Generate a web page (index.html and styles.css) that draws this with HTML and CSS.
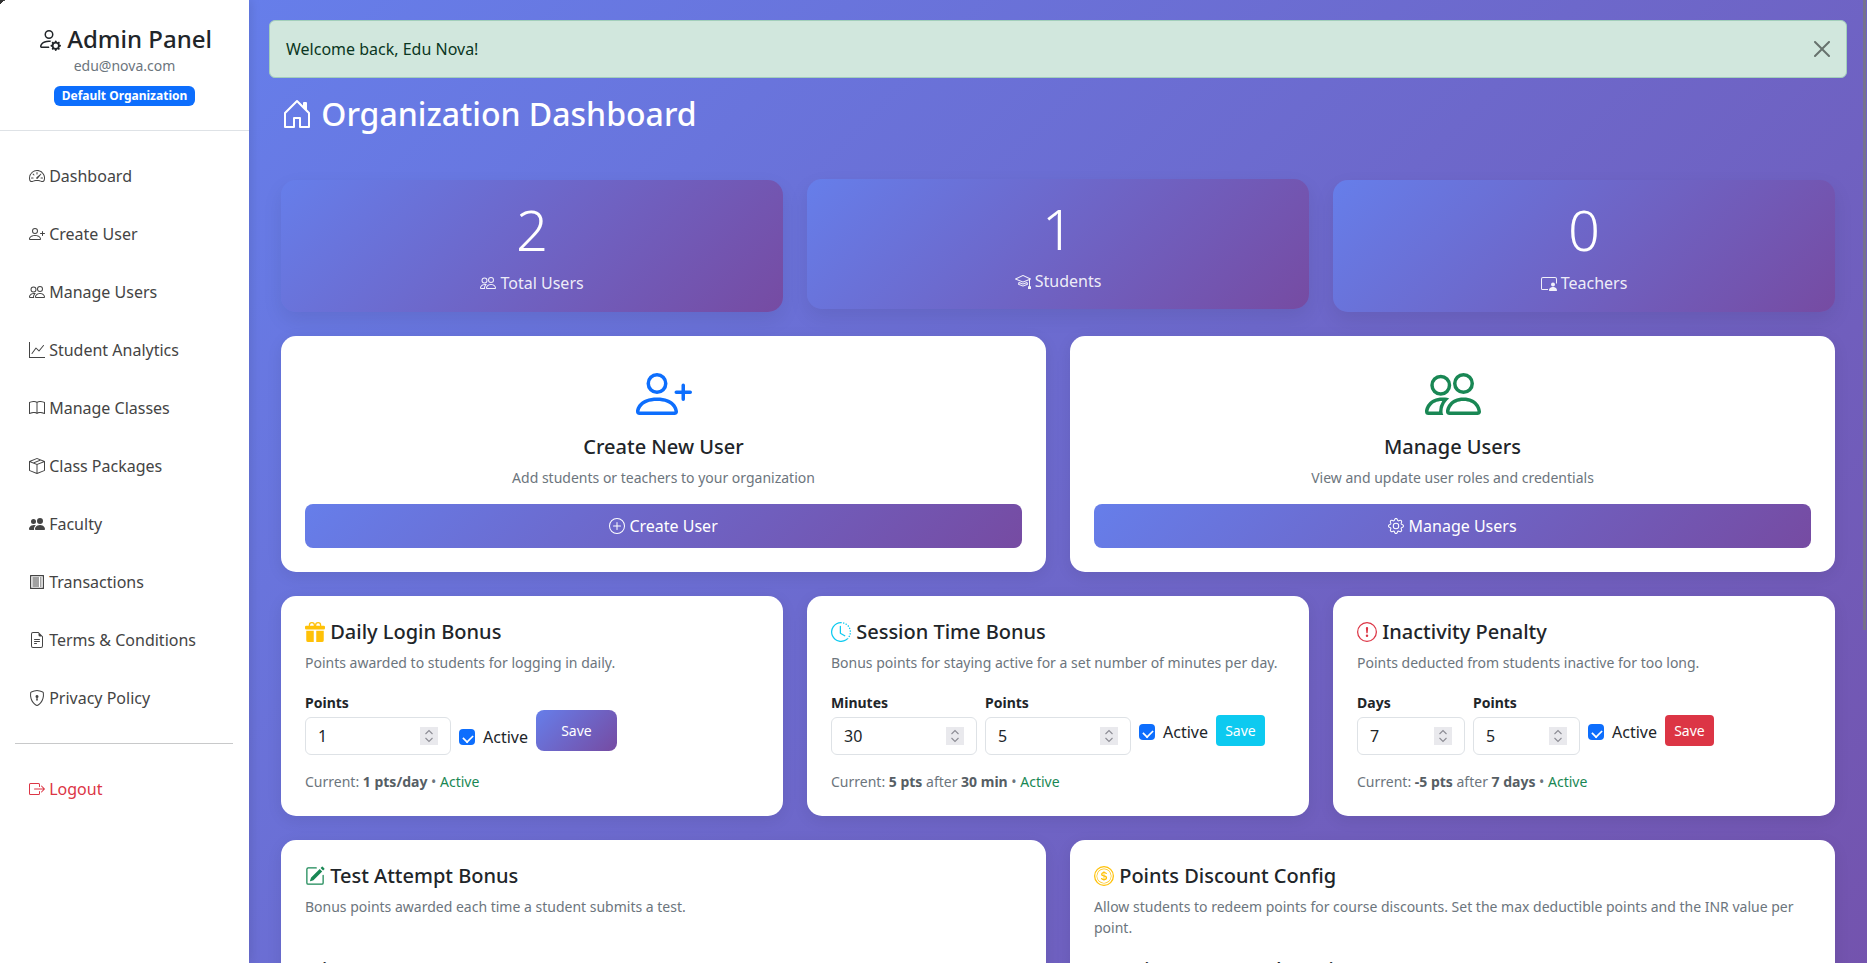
FILE: index.html
```html
<!DOCTYPE html>
<html lang="en">
<head>
<meta charset="utf-8">
<title>Organization Dashboard</title>
<link rel="stylesheet" href="styles.css">
</head>
<body>
<svg class="defs" aria-hidden="true">
<defs>
<symbol id="i-person-gear" viewBox="0 0 16 16"><path d="M11 5a3 3 0 1 1-6 0 3 3 0 0 1 6 0M8 7a2 2 0 1 0 0-4 2 2 0 0 0 0 4m.256 7a4.5 4.5 0 0 1-.229-1.004H3c.001-.246.154-.986.832-1.664C4.484 10.68 5.711 10 8 10q.39 0 .74.025c.226-.341.496-.65.804-.918Q8.844 9.002 8 9c-5 0-6 3-6 4s1 1 1 1zm3.63-4.54c.18-.613 1.048-.613 1.229 0l.043.148a.64.64 0 0 0 .921.382l.136-.074c.561-.306 1.175.308.87.869l-.075.136a.64.64 0 0 0 .382.92l.149.045c.612.18.612 1.048 0 1.229l-.15.043a.64.64 0 0 0-.38.921l.074.136c.305.561-.309 1.175-.87.87l-.136-.075a.64.64 0 0 0-.92.382l-.045.149c-.18.612-1.048.612-1.229 0l-.043-.15a.64.64 0 0 0-.921-.38l-.136.074c-.561.305-1.175-.309-.87-.87l.075-.136a.64.64 0 0 0-.382-.92l-.148-.045c-.613-.18-.613-1.048 0-1.229l.148-.043a.64.64 0 0 0 .382-.921l-.074-.136c-.306-.561.308-1.175.869-.87l.136.075a.64.64 0 0 0 .92-.382zM14 12.5a1.5 1.5 0 1 0-3 0 1.5 1.5 0 0 0 3 0"/></symbol>
<symbol id="i-speedometer" viewBox="0 0 16 16"><path d="M8 4a.5.5 0 0 1 .5.5V6a.5.5 0 0 1-1 0V4.5A.5.5 0 0 1 8 4M3.732 5.732a.5.5 0 0 1 .707 0l.915.914a.5.5 0 1 1-.708.708l-.914-.915a.5.5 0 0 1 0-.707M2 10a.5.5 0 0 1 .5-.5h1.586a.5.5 0 0 1 0 1H2.5A.5.5 0 0 1 2 10m9.5 0a.5.5 0 0 1 .5-.5h1.5a.5.5 0 0 1 0 1H12a.5.5 0 0 1-.5-.5m.754-4.246a.39.39 0 0 0-.527-.02L7.547 9.31a.91.91 0 1 0 1.302 1.258l3.434-4.297a.39.39 0 0 0-.029-.518z"/><path fill-rule="evenodd" d="M0 10a8 8 0 1 1 15.547 2.661c-.442 1.253-1.845 1.602-2.932 1.25C11.309 13.488 9.475 13 8 13c-1.474 0-3.31.488-4.615.911-1.087.352-2.49.003-2.932-1.25A8 8 0 0 1 0 10m8-7a7 7 0 0 0-6.603 9.329c.203.575.923.876 1.68.63C4.397 12.533 6.358 12 8 12s3.604.532 4.923.96c.757.245 1.477-.056 1.68-.631A7 7 0 0 0 8 3"/></symbol>
<symbol id="i-person-plus" viewBox="0 0 16 16"><path d="M6 8a3 3 0 1 0 0-6 3 3 0 0 0 0 6m2-3a2 2 0 1 1-4 0 2 2 0 0 1 4 0m4 8c0 1-1 1-1 1H1s-1 0-1-1 1-4 6-4 6 3 6 4m-1-.004c-.001-.246-.154-.986-.832-1.664C9.516 10.68 8.289 10 6 10s-3.516.68-4.168 1.332c-.678.678-.83 1.418-.832 1.664z"/><path fill-rule="evenodd" d="M13.5 5a.5.5 0 0 1 .5.5V7h1.5a.5.5 0 0 1 0 1H14v1.5a.5.5 0 0 1-1 0V8h-1.5a.5.5 0 0 1 0-1H13V5.5a.5.5 0 0 1 .5-.5"/></symbol>
<symbol id="i-people" viewBox="0 0 16 16"><path d="M15 14s1 0 1-1-1-4-5-4-5 3-5 4 1 1 1 1zm-7.978-1L7 12.996c.001-.264.167-1.03.76-1.72C8.312 10.629 9.282 10 11 10c1.717 0 2.687.63 3.24 1.276.593.69.758 1.457.76 1.72l-.008.002-.014.002H7.022ZM11 7a2 2 0 1 0 0-4 2 2 0 0 0 0 4m3-2a3 3 0 1 1-6 0 3 3 0 0 1 6 0M6.936 9.28a6 6 0 0 0-1.23-.247A7 7 0 0 0 5 9c-4 0-5 3-5 4q0 1 1 1h4.216A2.24 2.24 0 0 1 5 13c0-1.01.377-2.042 1.09-2.904.243-.294.526-.569.846-.816M4.92 10A5.5 5.5 0 0 0 4 13H1c0-.26.164-1.03.76-1.724.545-.636 1.492-1.256 3.16-1.275ZM1.5 5.5a3 3 0 1 1 6 0 3 3 0 0 1-6 0m3-2a2 2 0 1 0 0 4 2 2 0 0 0 0-4"/></symbol>
<symbol id="i-graph" viewBox="0 0 16 16"><path fill-rule="evenodd" d="M0 0h1v15h15v1H0zm14.817 3.113a.5.5 0 0 1 .07.704l-4.5 5.5a.5.5 0 0 1-.74.037L7.06 6.767l-3.656 5.027a.5.5 0 0 1-.808-.588l4-5.5a.5.5 0 0 1 .758-.06l2.609 2.61 4.15-5.073a.5.5 0 0 1 .704-.07"/></symbol>
<symbol id="i-book" viewBox="0 0 16 16"><path d="M1 2.828c.885-.37 2.154-.769 3.388-.893 1.33-.134 2.458.063 3.112.752v9.746c-.935-.53-2.12-.603-3.213-.493-1.18.12-2.37.461-3.287.811zm7.5-.141c.654-.689 1.782-.886 3.112-.752 1.234.124 2.503.523 3.388.893v9.923c-.918-.35-2.107-.692-3.287-.81-1.094-.111-2.278-.039-3.213.492zM8 1.783C7.015.936 5.587.81 4.287.94c-1.514.153-3.042.672-3.994 1.105A.5.5 0 0 0 0 2.5v11a.5.5 0 0 0 .707.455c.882-.4 2.303-.881 3.68-1.02 1.409-.142 2.59.087 3.223.877a.5.5 0 0 0 .78 0c.633-.79 1.814-1.019 3.222-.877 1.378.139 2.8.62 3.681 1.02A.5.5 0 0 0 16 13.5v-11a.5.5 0 0 0-.293-.455c-.952-.433-2.48-.952-3.994-1.105C10.413.809 8.985.936 8 1.783"/></symbol>
<symbol id="i-box" viewBox="0 0 16 16"><path d="M8.186 1.113a.5.5 0 0 0-.372 0L1.846 3.5l2.404.961L10.404 2zm3.564 1.426L5.596 5 8 5.961 14.154 3.5zm3.25 1.7-6.5 2.6v7.922l6.5-2.6V4.24zM7.5 14.762V6.838L1 4.239v7.925zM7.443.184a1.5 1.5 0 0 1 1.114 0l7.129 2.852A.5.5 0 0 1 16 3.5v8.662a1 1 0 0 1-.629.928l-7.185 2.874a.5.5 0 0 1-.372 0L.63 13.09a1 1 0 0 1-.63-.928V3.5a.5.5 0 0 1 .314-.464z"/></symbol>
<symbol id="i-people-fill" viewBox="0 0 16 16"><path d="M7 14s-1 0-1-1 1-4 5-4 5 3 5 4-1 1-1 1zm4-6a3 3 0 1 0 0-6 3 3 0 0 0 0 6m-5.784 6A2.24 2.24 0 0 1 5 13c0-1.355.68-2.75 1.936-3.72A6.3 6.3 0 0 0 5 9c-4 0-5 3-5 4s1 1 1 1zM4.5 8a2.5 2.5 0 1 0 0-5 2.5 2.5 0 0 0 0 5"/></symbol>
<symbol id="i-transactions" viewBox="0 0 16 16"><path fill-rule="evenodd" d="M1.5 1h13a.5.5 0 0 1 .5.5v13a.5.5 0 0 1-.5.5h-13a.5.5 0 0 1-.5-.5v-13a.5.5 0 0 1 .5-.5m.7 1.2v11.6h11.6V2.2z"/><path d="M3.5 3.5h6.500v1H3.5zM3.5 5.5h6.500v1H3.5zM3.5 7.5h6.500v1H3.5zM3.5 9.5h6.500v1H3.5zM3.5 11.5h6.500v1H3.5zM11 3.5h1.500v1H11zM11 5.5h1.500v1H11zM11 7.5h1.500v1H11zM11 9.500h1.500v1H11zM11 11.500h1.500v1H11z"/></symbol>
<symbol id="i-file" viewBox="0 0 16 16"><path d="M5.5 7a.5.5 0 0 0 0 1h5a.5.5 0 0 0 0-1zM5 9.5a.5.5 0 0 1 .5-.5h5a.5.5 0 0 1 0 1h-5a.5.5 0 0 1-.5-.5m0 2a.5.5 0 0 1 .5-.5h2a.5.5 0 0 1 0 1h-2a.5.5 0 0 1-.5-.5"/><path d="M9.5 0H4a2 2 0 0 0-2 2v12a2 2 0 0 0 2 2h8a2 2 0 0 0 2-2V4.5zm0 1v2A1.5 1.5 0 0 0 11 4.5h2V14a1 1 0 0 1-1 1H4a1 1 0 0 1-1-1V2a1 1 0 0 1 1-1z"/></symbol>
<symbol id="i-shield" viewBox="0 0 16 16"><path d="M5.338 1.59a61 61 0 0 0-2.837.856.48.48 0 0 0-.328.39c-.554 4.157.726 7.19 2.253 9.188a10.7 10.7 0 0 0 2.287 2.233c.346.244.652.42.893.533q.18.085.293.118a1 1 0 0 0 .101.025 1 1 0 0 0 .1-.025q.114-.034.294-.118c.24-.113.547-.29.893-.533a10.7 10.7 0 0 0 2.287-2.233c1.527-1.997 2.807-5.031 2.253-9.188a.48.48 0 0 0-.328-.39c-.651-.213-1.75-.56-2.837-.855C9.552 1.29 8.531 1.067 8 1.067c-.53 0-1.552.223-2.662.524zM5.072.56C6.157.265 7.31 0 8 0s1.843.265 2.928.56c1.11.3 2.229.655 2.887.87a1.54 1.54 0 0 1 1.044 1.262c.596 4.477-.787 7.795-2.465 9.99a11.8 11.8 0 0 1-2.517 2.453 7 7 0 0 1-1.048.625c-.28.132-.581.24-.829.24s-.548-.108-.829-.24a7 7 0 0 1-1.048-.625 11.8 11.8 0 0 1-2.517-2.453C1.928 10.487.545 7.169 1.141 2.692A1.54 1.54 0 0 1 2.185 1.43 63 63 0 0 1 5.072.56"/><path d="M9.5 6.5a1.5 1.5 0 0 1-1 1.415l.385 1.99a.5.5 0 0 1-.491.595h-.788a.5.5 0 0 1-.49-.595l.384-1.99a1.5 1.5 0 1 1 2-1.415"/></symbol>
<symbol id="i-logout" viewBox="0 0 16 16"><path fill-rule="evenodd" d="M10 12.5a.5.5 0 0 1-.5.5h-8a.5.5 0 0 1-.5-.5v-9a.5.5 0 0 1 .5-.5h8a.5.5 0 0 1 .5.5v2a.5.5 0 0 0 1 0v-2A1.5 1.5 0 0 0 9.5 2h-8A1.5 1.5 0 0 0 0 3.5v9A1.5 1.5 0 0 0 1.5 14h8a1.5 1.5 0 0 0 1.5-1.5v-2a.5.5 0 0 0-1 0z"/><path fill-rule="evenodd" d="M15.854 8.354a.5.5 0 0 0 0-.708l-3-3a.5.5 0 0 0-.708.708L14.293 7.5H5.5a.5.5 0 0 0 0 1h8.793l-2.147 2.146a.5.5 0 0 0 .708.708z"/></symbol>
<symbol id="i-house" viewBox="0 0 16 16"><path d="M8.354 1.146a.5.5 0 0 0-.708 0l-6 6A.5.5 0 0 0 1.5 7.5v7a.5.5 0 0 0 .5.5h4.5a.5.5 0 0 0 .5-.5v-4h2v4a.5.5 0 0 0 .5.5H14a.5.5 0 0 0 .5-.5v-7a.5.5 0 0 0-.146-.354L13 5.793V2.5a.5.5 0 0 0-.5-.5h-1a.5.5 0 0 0-.5.5v1.293zM2.5 14V7.707l5.5-5.5 5.5 5.5V14H10v-4a.5.5 0 0 0-.5-.5h-3a.5.5 0 0 0-.5.5v4z"/></symbol>
<symbol id="i-mortar" viewBox="0 0 16 16"><path d="M8.211 2.047a.5.5 0 0 0-.422 0l-7.5 3.5a.5.5 0 0 0 .025.917l7.5 3a.5.5 0 0 0 .372 0L14 7.14V13a1 1 0 0 0-1 1v2h3v-2a1 1 0 0 0-1-1V6.739l.686-.275a.5.5 0 0 0 .025-.917zM8 8.46 1.758 5.965 8 3.052l6.242 2.913z"/><path d="M4.176 9.032a.5.5 0 0 0-.656.327l-.5 1.7a.5.5 0 0 0 .294.605l4.5 1.8a.5.5 0 0 0 .372 0l4.5-1.8a.5.5 0 0 0 .294-.605l-.5-1.7a.5.5 0 0 0-.656-.327L8 10.466zm-.068 1.873.22-.748 3.496 1.311a.5.5 0 0 0 .352 0l3.496-1.311.22.748L8 12.46z"/></symbol>
<symbol id="i-teacher" viewBox="0 0 16 16"><path d="M14 9.5a2 2 0 1 1-4 0 2 2 0 0 1 4 0m-6 5.7c0 .8.8.8.8.8h6.4s.8 0 .8-.8-.8-3.2-4-3.2-4 2.4-4 3.2"/><path d="M2 2a2 2 0 0 0-2 2v9.5A1.5 1.5 0 0 0 1.5 15h5.5v-1H1.5a.5.5 0 0 1-.5-.5V4a1 1 0 0 1 1-1h12a1 1 0 0 1 1 1v4.5h1V4a2 2 0 0 0-2-2z"/></symbol>
<symbol id="i-plus-circle" viewBox="0 0 16 16"><path d="M8 15A7 7 0 1 1 8 1a7 7 0 0 1 0 14m0 1A8 8 0 1 0 8 0a8 8 0 0 0 0 16"/><path d="M8 4a.5.5 0 0 1 .5.5v3h3a.5.5 0 0 1 0 1h-3v3a.5.5 0 0 1-1 0v-3h-3a.5.5 0 0 1 0-1h3v-3A.5.5 0 0 1 8 4"/></symbol>
<symbol id="i-gear" viewBox="0 0 16 16"><path d="M8 4.754a3.246 3.246 0 1 0 0 6.492 3.246 3.246 0 0 0 0-6.492M5.754 8a2.246 2.246 0 1 1 4.492 0 2.246 2.246 0 0 1-4.492 0"/><path d="M9.796 1.343c-.527-1.79-3.065-1.79-3.592 0l-.094.319a.873.873 0 0 1-1.255.52l-.292-.16c-1.64-.892-3.433.902-2.54 2.541l.159.292a.873.873 0 0 1-.52 1.255l-.319.094c-1.79.527-1.79 3.065 0 3.592l.319.094a.873.873 0 0 1 .52 1.255l-.16.292c-.892 1.64.901 3.434 2.541 2.54l.292-.159a.873.873 0 0 1 1.255.52l.094.319c.527 1.79 3.065 1.79 3.592 0l.094-.319a.873.873 0 0 1 1.255-.52l.292.16c1.64.893 3.434-.902 2.54-2.541l-.159-.292a.873.873 0 0 1 .52-1.255l.319-.094c1.79-.527 1.79-3.065 0-3.592l-.319-.094a.873.873 0 0 1-.52-1.255l.16-.292c.893-1.64-.902-3.433-2.541-2.54l-.292.159a.873.873 0 0 1-1.255-.52zm-2.633.283c.246-.835 1.428-.835 1.674 0l.094.319a1.873 1.873 0 0 0 2.693 1.115l.291-.16c.764-.415 1.6.42 1.184 1.185l-.159.292a1.873 1.873 0 0 0 1.116 2.692l.318.094c.835.246.835 1.428 0 1.674l-.319.094a1.873 1.873 0 0 0-1.115 2.693l.16.291c.415.764-.42 1.6-1.185 1.184l-.291-.159a1.873 1.873 0 0 0-2.693 1.116l-.094.318c-.246.835-1.428.835-1.674 0l-.094-.319a1.873 1.873 0 0 0-2.692-1.115l-.292.16c-.764.415-1.6-.42-1.184-1.185l.159-.291A1.873 1.873 0 0 0 1.945 8.93l-.319-.094c-.835-.246-.835-1.428 0-1.674l.319-.094A1.873 1.873 0 0 0 3.06 4.377l-.16-.292c-.415-.764.42-1.6 1.185-1.184l.292.159a1.873 1.873 0 0 0 2.692-1.115z"/></symbol>
<symbol id="i-gift" viewBox="0 0 16 16"><path d="M3 2.5a2.5 2.5 0 0 1 5 0 2.5 2.5 0 0 1 5 0v.006c0 .07 0 .27-.038.494H15a1 1 0 0 1 1 1v1a1 1 0 0 1-1 1H1a1 1 0 0 1-1-1V4a1 1 0 0 1 1-1h2.038A3 3 0 0 1 3 2.506zm1.068.5H7v-.5a1.5 1.5 0 1 0-3 0c0 .085.002.274.045.43zM9 3h2.932l.023-.07c.043-.156.045-.345.045-.43a1.5 1.5 0 0 0-3 0zm6 4v7.5a1.5 1.5 0 0 1-1.5 1.5H9V7zM2.5 16A1.5 1.5 0 0 1 1 14.5V7h6v9z"/></symbol>
<symbol id="i-clock" viewBox="0 0 16 16"><path d="M8.515 1.019A7 7 0 0 0 8 1V0a8 8 0 0 1 .589.022zm2.004.45a7 7 0 0 0-.985-.299l.219-.976q.576.129 1.126.342zm1.37.71a7 7 0 0 0-.439-.27l.493-.87a8 8 0 0 1 .979.654l-.615.789a7 7 0 0 0-.418-.302zm1.834 1.79a7 7 0 0 0-.653-.796l.724-.69q.406.429.747.91zm.744 1.352a7 7 0 0 0-.214-.468l.893-.45a8 8 0 0 1 .45 1.088l-.95.313a7 7 0 0 0-.179-.483m.53 2.507a7 7 0 0 0-.1-1.025l.985-.17q.1.58.116 1.17zm-.131 1.538q.05-.254.081-.51l.993.123a8 8 0 0 1-.23 1.155l-.964-.267q.069-.247.12-.501m-.952 2.379q.276-.436.486-.908l.914.405q-.24.54-.555 1.038zm-.964 1.205q.183-.183.35-.378l.758.653a8 8 0 0 1-.401.432z"/><path d="M8 1a7 7 0 1 0 4.95 11.95l.707.707A8.001 8.001 0 1 1 8 0z"/><path d="M7.5 3a.5.5 0 0 1 .5.5v5.21l3.248 1.856a.5.5 0 0 1-.496.868l-3.5-2A.5.5 0 0 1 7 9V3.5a.5.5 0 0 1 .5-.5"/></symbol>
<symbol id="i-exclaim" viewBox="0 0 16 16"><path d="M8 15A7 7 0 1 1 8 1a7 7 0 0 1 0 14m0 1A8 8 0 1 0 8 0a8 8 0 0 0 0 16"/><path d="M7.002 11a1 1 0 1 1 2 0 1 1 0 0 1-2 0M7.1 4.995a.905.905 0 1 1 1.8 0l-.35 3.507a.552.552 0 0 1-1.1 0z"/></symbol>
<symbol id="i-pencil" viewBox="0 0 16 16"><path d="M15.502 1.94a.5.5 0 0 1 0 .706L14.459 3.69l-2-2L13.502.646a.5.5 0 0 1 .707 0l1.293 1.293zm-1.75 2.456-2-2L4.939 9.21a.5.5 0 0 0-.121.196l-.805 2.414a.25.25 0 0 0 .316.316l2.414-.805a.5.5 0 0 0 .196-.12l6.813-6.814z"/><path fill-rule="evenodd" d="M1 13.5A1.5 1.5 0 0 0 2.5 15h11a1.5 1.5 0 0 0 1.5-1.5v-6a.5.5 0 0 0-1 0v6a.5.5 0 0 1-.5.5h-11a.5.5 0 0 1-.5-.5v-11a.5.5 0 0 1 .5-.5H9a.5.5 0 0 0 0-1H2.5A1.5 1.5 0 0 0 1 2.5z"/></symbol>
<symbol id="i-coin" viewBox="0 0 16 16"><path d="M5.5 9.511c.076.954.83 1.697 2.182 1.785V12h.6v-.709c1.4-.098 2.218-.846 2.218-1.932 0-.987-.626-1.496-1.745-1.76l-.473-.112V5.57c.6.068.982.396 1.074.85h1.052c-.076-.919-.864-1.638-2.126-1.716V4h-.6v.719c-1.195.117-2.01.836-2.01 1.853 0 .9.606 1.472 1.613 1.707l.397.098v2.034c-.615-.093-1.022-.43-1.114-.9zm2.177-2.166c-.59-.137-.91-.416-.91-.836 0-.47.345-.822.915-.925v1.76h-.005zm.692 1.193c.717.166 1.048.435 1.048.91 0 .542-.412.914-1.135.982V8.518z"/><path d="M8 15A7 7 0 1 1 8 1a7 7 0 0 1 0 14m0 1A8 8 0 1 0 8 0a8 8 0 0 0 0 16"/><path d="M8 13.5a5.5 5.5 0 1 1 0-11 5.5 5.5 0 0 1 0 11m0 .5A6 6 0 1 0 8 2a6 6 0 0 0 0 12"/></symbol>
<symbol id="i-spin" viewBox="0 0 18 18"><path d="M5.500 7 9 3.500 12.500 7M5.500 11 9 14.500 12.500 11" fill="none" stroke="#8c8c94" stroke-width="1.100"/></symbol>
</defs>
</svg>

<div class="layout">
  <aside class="sidebar">
    <header class="side-head">
      <h4 class="side-title"><svg class="bi"><use href="#i-person-gear"/></svg> Admin Panel</h4>
      <div class="side-mail">edu@nova.com</div>
      <span class="org-badge">Default Organization</span>
    </header>
    <nav class="side-nav">
      <a class="side-link"><svg class="bi"><use href="#i-speedometer"/></svg> Dashboard</a>
      <a class="side-link"><svg class="bi"><use href="#i-person-plus"/></svg> Create User</a>
      <a class="side-link"><svg class="bi"><use href="#i-people"/></svg> Manage Users</a>
      <a class="side-link"><svg class="bi"><use href="#i-graph"/></svg> Student Analytics</a>
      <a class="side-link"><svg class="bi"><use href="#i-book"/></svg> Manage Classes</a>
      <a class="side-link"><svg class="bi"><use href="#i-box"/></svg> Class Packages</a>
      <a class="side-link"><svg class="bi"><use href="#i-people-fill"/></svg> Faculty</a>
      <a class="side-link"><svg class="bi"><use href="#i-transactions"/></svg> Transactions</a>
      <a class="side-link"><svg class="bi"><use href="#i-file"/></svg> Terms &amp; Conditions</a>
      <a class="side-link"><svg class="bi"><use href="#i-shield"/></svg> Privacy Policy</a>
      <hr class="side-rule">
      <a class="side-link logout"><svg class="bi"><use href="#i-logout"/></svg> Logout</a>
    </nav>
  </aside>

  <main class="main">
    <div class="main-inner">
      <div class="alert">
        <span>Welcome back, Edu Nova!</span>
        <svg class="alert-close" viewBox="0 0 16 16" aria-label="Close"><path d="M.293.293a1 1 0 0 1 1.414 0L8 6.586 14.293.293a1 1 0 1 1 1.414 1.414L9.414 8l6.293 6.293a1 1 0 0 1-1.414 1.414L8 9.414l-6.293 6.293a1 1 0 0 1-1.414-1.414L6.586 8 .293 1.707a1 1 0 0 1 0-1.414"/></svg>
      </div>
      <div class="container">
        <h2 class="page-title"><svg class="bi"><use href="#i-house"/></svg> Organization Dashboard</h2>

        <section class="grid three stats">
          <div class="stat">
            <div class="stat-num">2</div>
            <div class="stat-label"><svg class="bi"><use href="#i-people"/></svg> Total Users</div>
          </div>
          <div class="stat stat-students">
            <div class="stat-num">1</div>
            <div class="stat-label"><svg class="bi"><use href="#i-mortar"/></svg> Students</div>
          </div>
          <div class="stat">
            <div class="stat-num">0</div>
            <div class="stat-label"><svg class="bi"><use href="#i-teacher"/></svg> Teachers</div>
          </div>
        </section>

        <section class="grid two">
          <div class="card action">
            <svg class="bi action-icon blue"><use href="#i-person-plus"/></svg>
            <h5 class="card-title">Create New User</h5>
            <p class="card-desc">Add students or teachers to your organization</p>
            <a class="wide-btn"><svg class="bi"><use href="#i-plus-circle"/></svg> Create User</a>
          </div>
          <div class="card action">
            <svg class="bi action-icon green"><use href="#i-people"/></svg>
            <h5 class="card-title">Manage Users</h5>
            <p class="card-desc">View and update user roles and credentials</p>
            <a class="wide-btn"><svg class="bi"><use href="#i-gear"/></svg> Manage Users</a>
          </div>
        </section>

        <section class="grid three">
          <div class="card config">
            <h5 class="card-title"><svg class="bi yellow"><use href="#i-gift"/></svg> Daily Login Bonus</h5>
            <p class="card-desc">Points awarded to students for logging in daily.</p>
            <div class="form-row">
              <div class="field"><label class="field-label">Points</label><div class="num-wrap"><input class="num w-146" type="number" value="1"><svg class="spin"><use href="#i-spin"/></svg></div></div>
              <label class="check check-low"><input type="checkbox" checked> Active</label>
              <button class="save save-gradient">Save</button>
            </div>
            <p class="current">Current: <b>1 pts/day</b> • <span class="on">Active</span></p>
          </div>
          <div class="card config">
            <h5 class="card-title"><svg class="bi cyan"><use href="#i-clock"/></svg> Session Time Bonus</h5>
            <p class="card-desc">Bonus points for staying active for a set number of minutes per day.</p>
            <div class="form-row">
              <div class="field"><label class="field-label">Minutes</label><div class="num-wrap"><input class="num w-146" type="number" value="30"><svg class="spin"><use href="#i-spin"/></svg></div></div>
              <div class="field"><label class="field-label">Points</label><div class="num-wrap"><input class="num w-146" type="number" value="5"><svg class="spin"><use href="#i-spin"/></svg></div></div>
              <label class="check"><input type="checkbox" checked> Active</label>
              <button class="save save-cyan">Save</button>
            </div>
            <p class="current">Current: <b>5 pts</b> after <b>30 min</b> • <span class="on">Active</span></p>
          </div>
          <div class="card config">
            <h5 class="card-title"><svg class="bi red"><use href="#i-exclaim"/></svg> Inactivity Penalty</h5>
            <p class="card-desc">Points deducted from students inactive for too long.</p>
            <div class="form-row">
              <div class="field"><label class="field-label">Days</label><div class="num-wrap"><input class="num w-108" type="number" value="7"><svg class="spin"><use href="#i-spin"/></svg></div></div>
              <div class="field"><label class="field-label">Points</label><div class="num-wrap"><input class="num w-107" type="number" value="5"><svg class="spin"><use href="#i-spin"/></svg></div></div>
              <label class="check"><input type="checkbox" checked> Active</label>
              <button class="save save-red">Save</button>
            </div>
            <p class="current">Current: <b>-5 pts</b> after <b>7 days</b> • <span class="on">Active</span></p>
          </div>
        </section>

        <section class="grid two">
          <div class="card config">
            <h5 class="card-title"><svg class="bi green"><use href="#i-pencil"/></svg> Test Attempt Bonus</h5>
            <p class="card-desc">Bonus points awarded each time a student submits a test.</p>
            <div class="form-row push">
              <div class="field"><label class="field-label">Points</label><div class="num-wrap"><input class="num w-146" type="number" value="2"><svg class="spin"><use href="#i-spin"/></svg></div></div>
            </div>
          </div>
          <div class="card config">
            <h5 class="card-title"><svg class="bi yellow"><use href="#i-coin"/></svg> Points Discount Config</h5>
            <p class="card-desc">Allow students to redeem points for course discounts. Set the max deductible points and the INR value per point.</p>
            <div class="form-row">
              <div class="field"><label class="field-label">Max Points to Use</label><div class="num-wrap"><input class="num w-146" type="number" value="100"><svg class="spin"><use href="#i-spin"/></svg></div></div>
              <div class="field"><label class="field-label">₹ Value / Point</label><div class="num-wrap"><input class="num w-146" type="number" value="1"><svg class="spin"><use href="#i-spin"/></svg></div></div>
            </div>
          </div>
        </section>
      </div>
    </div>
  </main>
  <div class="scroll-thumb"></div>
  <div class="window-corner"></div>
</div>
</body>
</html>
```

FILE: styles.css
```css
* { box-sizing: border-box; }
html, body { margin: 0; height: 100%; overflow: hidden; }
body {
  font-family: "Noto Sans", "Liberation Sans", sans-serif;
  font-size: 16px;
  line-height: 1.5;
  color: #212529;
  background: #fff;
}
.defs { position: absolute; width: 0; height: 0; }
.bi { width: 1em; height: 1em; fill: currentColor; display: inline-block; vertical-align: -0.125em; }

.layout { display: flex; height: 963px; overflow: hidden; position: relative; }

/* sidebar */
.sidebar { width: 249px; flex: none; background: #fff; height: 963px; box-shadow: 2px 0 10px rgba(0,0,0,.1); z-index: 1; }
.side-head { height: 131px; padding-top: 24px; text-align: center; border-bottom: 1px solid #dee2e6; }
.side-title { margin: 0; font-size: 24px; font-weight: 500; line-height: 29px; color: #212529; height: 31px; }
.side-mail { font-size: 14px; color: #6c757d; line-height: 21px; }
.org-badge {
  display: inline-block; margin-top: 10px; padding: 0 8px; height: 20px;
  background: #0d6efd; color: #fff; font-size: 12px; font-weight: 700; line-height: 20px; border-radius: 6px;
}
.side-nav { padding: 16px 15px 0; }
.side-link { display: block; padding: 17px 14px; color: #444; line-height: 24px; white-space: nowrap; }
.side-link.logout { color: #dc3545; }
.side-rule { border: 0; border-top: 1px solid #c8c9ca; margin: 16px 1px 16px 0; }

/* main */
.main { flex: 1; min-width: 0; height: 963px; overflow: hidden; }
.main-inner {
  min-height: 1470px; padding: 20px;
  background: linear-gradient(135deg, #667eea 0%, #764ba2 100%);
}
.alert {
  display: flex; align-items: center; justify-content: space-between;
  height: 58px; padding: 0 16px; background: #d1e7dd; border: 1px solid #a3cfbb; border-radius: 6px; color: #0a3622;
}
.alert-close { width: 16px; height: 16px; fill: #000; opacity: .5; }
.container { padding: 0 12px; }
.page-title { margin: 17px 0 47px; font-size: 32px; font-weight: 500; line-height: 38px; color: #fff; height: 38px; }

.grid { display: grid; gap: 24px; margin-bottom: 24px; }
.three { grid-template-columns: repeat(3, 1fr); }
.two { grid-template-columns: repeat(2, 1fr); }

/* stat cards */
.stat {
  height: 132px; padding: 16px; border-radius: 15px; text-align: center; color: #fff;
  background: linear-gradient(135deg, #667eea 0%, #764ba2 100%);
  box-shadow: 0 8px 20px rgba(0,0,0,.08);
}
.stat-students { height: 130px; margin-top: -1px; }
.stat-num { font-size: 56px; font-weight: 300; line-height: 67px; margin-bottom: 8px; }
.stat-students .stat-num { margin-bottom: 7px; }
.stat-label { line-height: 24px; color: rgba(255,255,255,.9); }

/* cards */
.card { background: #fff; border-radius: 15px; padding: 24px; box-shadow: 0 4px 16px rgba(0,0,0,.08); }
.card-title { margin: 0 0 8px; font-size: 20px; font-weight: 500; line-height: 24px; color: #212529; }
.card-desc { margin: 0; font-size: 14px; line-height: 21px; color: #6c757d; }

.action { height: 236px; text-align: center; display: flex; flex-direction: column; align-items: center; padding-top: 30px; }
.action-icon { font-size: 56px; width: 56px; height: 56px; display: block; margin-bottom: 13px; }
.action .card-desc { margin-bottom: 12px; }
.blue { color: #0d6efd; }
.green { color: #198754; }
.yellow { color: #ffc107; }
.cyan { color: #0dcaf0; }
.red { color: #dc3545; }
.wide-btn {
  display: block; width: 100%; height: 44px; line-height: 44px; border-radius: 8px; color: #fff; margin-top: auto;
  background: linear-gradient(135deg, #667eea 0%, #764ba2 100%);
}

/* config forms */
.config { display: flex; flex-direction: column; min-height: 220px; }
.form-row { display: flex; align-items: center; gap: 8px; margin-top: 19px; height: 79px; }
.form-row.push { margin-top: 40px; }
.field { align-self: flex-start; }
.field-label { display: block; font-size: 14px; font-weight: 700; line-height: 21px; margin-bottom: 4px; color: #212529; }
.num-wrap { position: relative; }
.num {
  display: block; height: 38px; padding: 6px 12px; font: inherit; font-size: 16px; color: #212529;
  border: 1px solid #dee2e6; border-radius: 6px; background: #fff; appearance: textfield;
}
.num::-webkit-inner-spin-button, .num::-webkit-outer-spin-button { appearance: none; margin: 0; }
.spin { position: absolute; top: 10px; right: 13px; width: 18px; height: 18px; background: #e9e9ed; }
.w-146 { width: 146px; }
.w-108 { width: 108px; }
.w-107 { width: 107px; }
.check { display: flex; align-items: center; gap: 8px; line-height: 24px; color: #212529; }
.check-low { margin-top: 11px; }
.check input {
  appearance: none; width: 16px; height: 16px; margin: 0; border-radius: 4px; background-color: #0d6efd;
  position: relative;
}
.check input::after {
  content: ""; position: absolute; left: 5px; top: 3px; width: 6px; height: 9px;
  border: solid #fff; border-width: 0 2px 2px 0; transform: rotate(45deg) scale(.85);
}
.save { font: inherit; font-size: 14px; line-height: 21px; color: #fff; border: 1px solid transparent; cursor: pointer; margin-bottom: 2px; }
.save-gradient { width: 81px; height: 41px; border: 0; border-radius: 8px; background: linear-gradient(135deg, #667eea 0%, #764ba2 100%); }
.save-cyan { width: 49px; height: 31px; padding: 0; border-radius: 4px; background: #0dcaf0; }
.save-red { width: 49px; height: 31px; padding: 0; border-radius: 4px; background: #dc3545; }
.current { margin: 0; font-size: 14px; line-height: 21px; color: #6c757d; }
.current b { color: #565e64; }
.on { color: #198754; }

.scroll-thumb { position: absolute; top: 0; right: 1px; width: 3px; height: 630px; background: rgba(120,120,120,.7); z-index: 2; }
.window-corner { position: absolute; top: 0; left: 0; width: 7px; height: 4px; background: radial-gradient(circle 7px at 7px 7px, transparent 96%, #333 100%); z-index: 3; }
```
